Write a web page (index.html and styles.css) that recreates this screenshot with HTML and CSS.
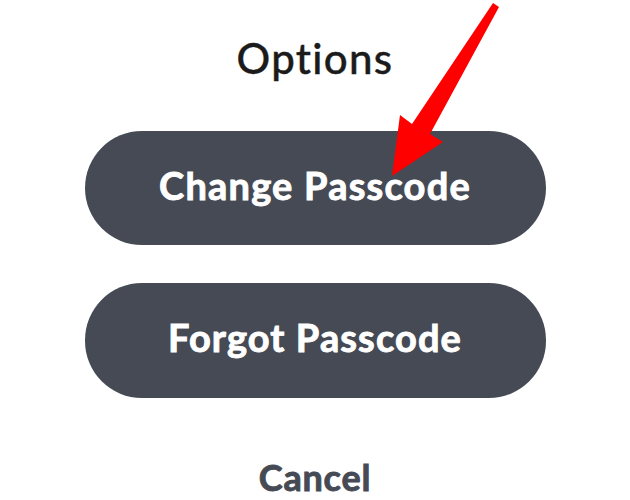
FILE: index.html
```html
<!DOCTYPE html>
<html>
<head>
<meta charset="utf-8">
<link rel="stylesheet" href="styles.css">
</head>
<body>
<div class="sheet">
  <h1 class="title">Options</h1>
  <div class="btn">Change Passcode</div>
  <div class="btn second">Forgot Passcode</div>
  <div class="cancel">Cancel</div>
  <svg class="arrow" width="630" height="200" viewBox="0 0 630 200">
    <polygon fill="#ff0000" points="493,3 499,7 430,134 443,142 392,176 400,115 412,124"/>
  </svg>
</div>
</body>
</html>
```
FILE: styles.css
```css
html, body {
  margin: 0;
  padding: 0;
  background: #ffffff;
}
.sheet {
  position: relative;
  width: 630px;
  height: 500px;
  overflow: hidden;
  display: flex;
  flex-direction: column;
  align-items: center;
  font-family: Lato, "Noto Sans", sans-serif;
}
.title {
  margin: 37px 0 0 0;
  font-size: 42px;
  line-height: 42px;
  font-weight: 500;
  color: #1b1b1b;
  letter-spacing: 1.3px;
  -webkit-text-stroke: 0.4px #1b1b1b;
}
.btn {
  box-sizing: border-box;
  margin-top: 52px;
  width: 461px;
  height: 114px;
  padding-bottom: 7px;
  border-radius: 57px;
  background: #454a54;
  color: #ffffff;
  font-size: 38px;
  font-weight: 700;
  letter-spacing: 1.2px;
  -webkit-text-stroke: 0.9px #ffffff;
  display: flex;
  align-items: center;
  justify-content: center;
}
.btn.second {
  margin-top: 38px;
  height: 115px;
  letter-spacing: 1.1px;
}
.cancel {
  margin-top: 61px;
  font-size: 36px;
  line-height: 36px;
  font-weight: 700;
  letter-spacing: 0.8px;
  color: #454a54;
  -webkit-text-stroke: 0.9px #454a54;
}
.arrow {
  position: absolute;
  left: 0;
  top: 0;
}
```
